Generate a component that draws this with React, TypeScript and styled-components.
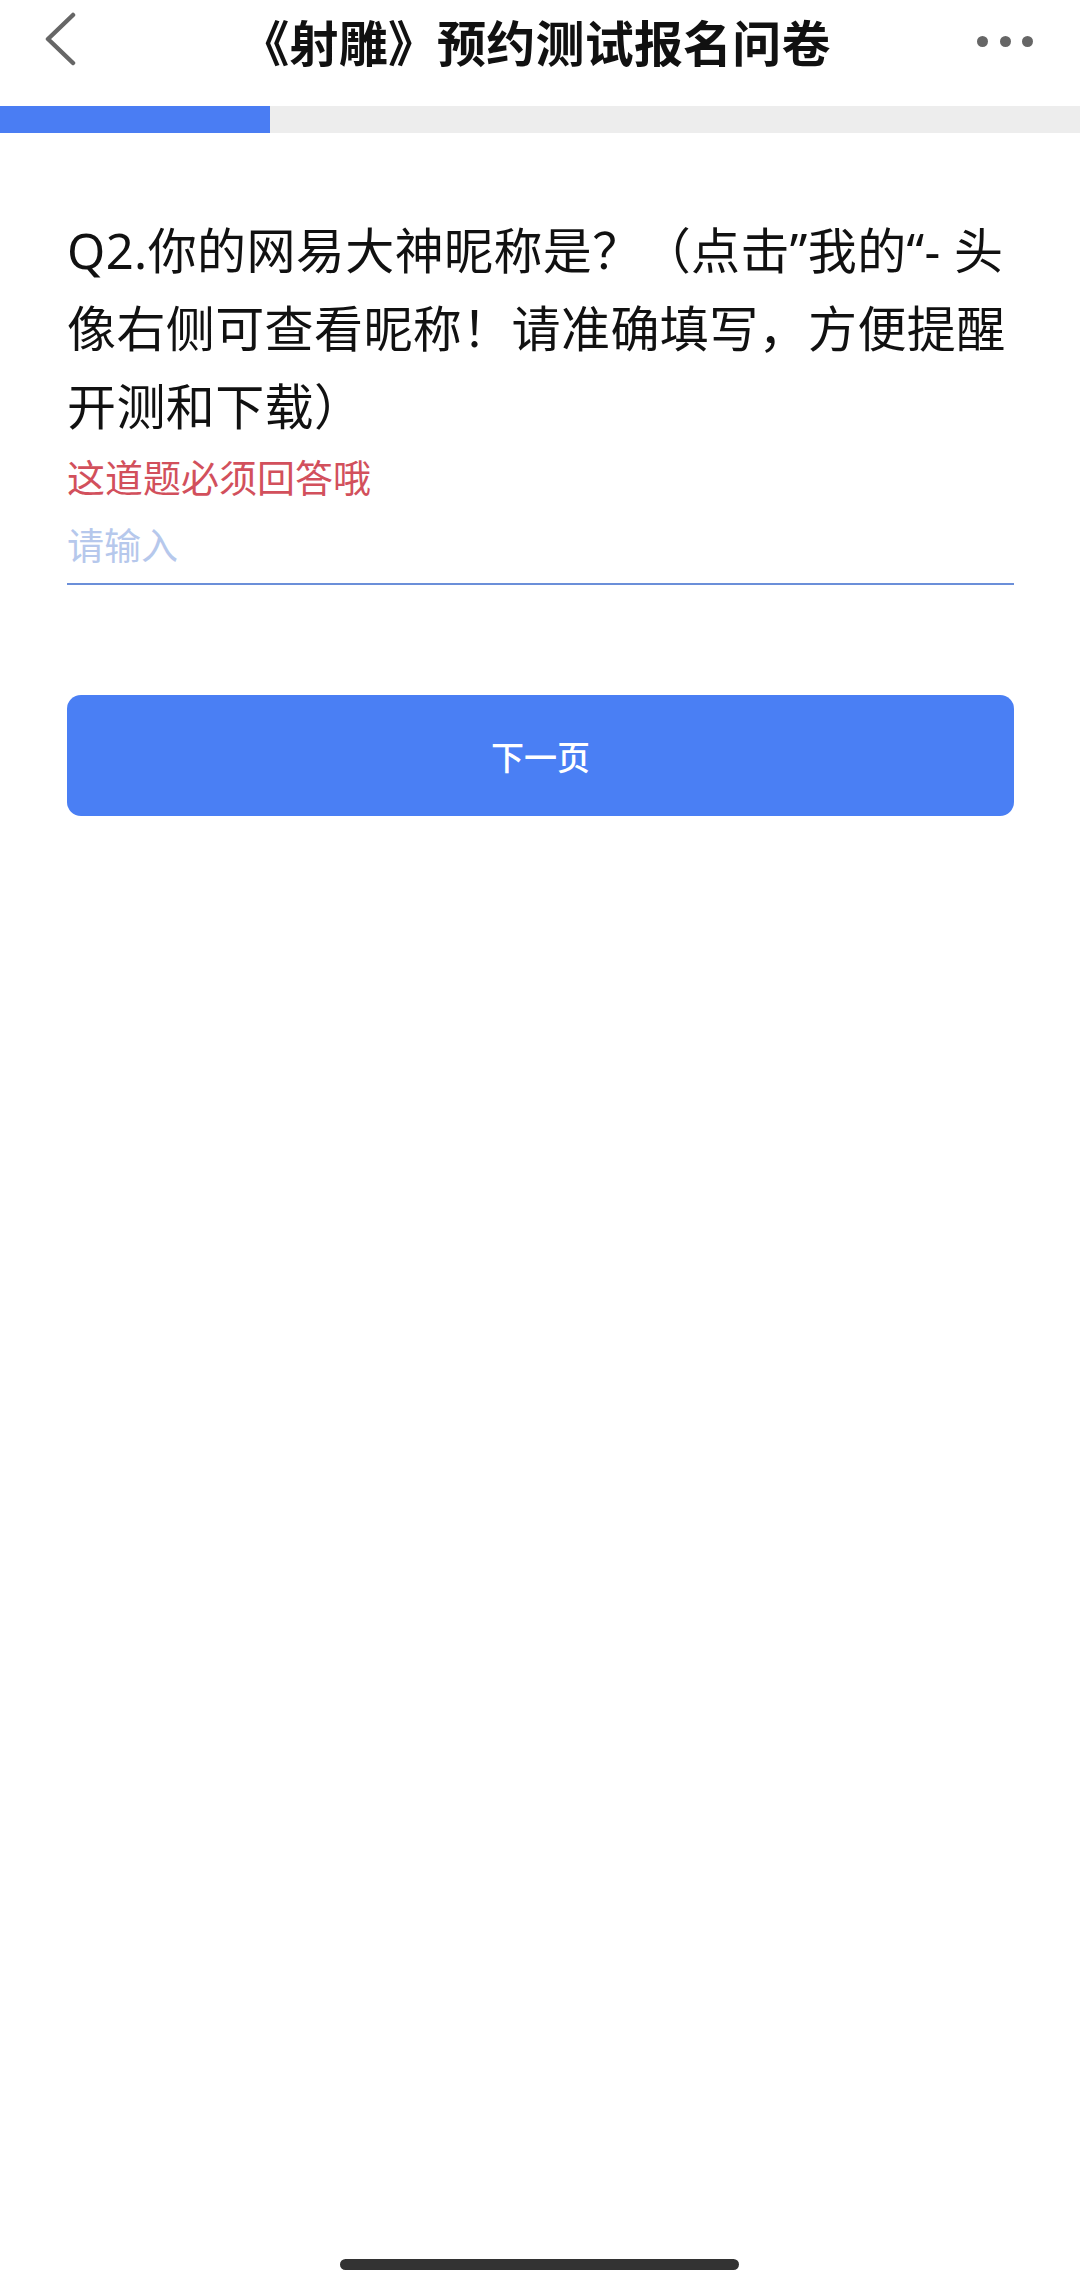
import React from "react";
import styled, { createGlobalStyle } from "styled-components";

const GlobalStyle = createGlobalStyle`
  * {
    box-sizing: border-box;
  }
  html, body {
    margin: 0;
    padding: 0;
    background: #ffffff;
    font-family: "Noto Sans", "Noto Sans CJK SC", sans-serif;
  }
`;

const Page = styled.div`
  width: 1080px;
  min-height: 2286px;
  background: #ffffff;
`;

const NavBar = styled.header`
  height: 80px;
  display: flex;
  align-items: center;
  justify-content: space-between;
  padding: 0 47px 0 40px;
`;

const BackButton = styled.button`
  width: 40px;
  height: 60px;
  padding: 0;
  border: none;
  background: none;
  display: flex;
  align-items: center;
  justify-content: center;
`;

const NavTitle = styled.h1`
  margin: 0 0 0 14px;
  font-family: "Noto Sans CJK SC", sans-serif;
  font-size: 49px;
  font-weight: 700;
  color: #111111;
  line-height: 1;
  letter-spacing: 0.2px;
`;

const MoreButton = styled.div`
  width: 56px;
  display: flex;
  align-items: center;
  justify-content: space-between;
  padding-top: 2px;
`;

const Dot = styled.span`
  width: 11px;
  height: 11px;
  border-radius: 50%;
  background: #666666;
`;

const Progress = styled.div`
  margin-top: 26px;
  height: 27px;
  background: #ededed;
`;

const ProgressFill = styled.div`
  height: 100%;
  background: #4a7df3;
`;

const Content = styled.main`
  padding: 78px 66px 0 67px;
`;

const Question = styled.p`
  margin: 0;
  font-size: 49px;
  line-height: 78px;
  letter-spacing: 0.4px;
  color: #111111;
`;

const ErrorTip = styled.div`
  margin-top: 6px;
  font-family: "Noto Sans CJK SC", sans-serif;
  font-size: 38px;
  line-height: 50px;
  color: #d2505c;
`;

const TextInput = styled.input`
  display: block;
  width: 100%;
  height: 80px;
  margin-top: 4px;
  padding: 0;
  border: none;
  border-bottom: 2px solid #6b8fd9;
  outline: none;
  background: transparent;
  font-family: "Noto Sans CJK SC", sans-serif;
  font-size: 37px;
  color: #222222;
  &::placeholder {
    color: #b6c8ec;
  }
`;

const NextButton = styled.button`
  display: block;
  width: 100%;
  height: 121px;
  margin-top: 110px;
  border: none;
  border-radius: 14px;
  background: #4a7ff4;
  color: #ffffff;
  font-family: "Noto Sans CJK SC", sans-serif;
  font-size: 33px;
  font-weight: 500;
`;

const HomeIndicator = styled.div`
  position: fixed;
  left: 340px;
  bottom: 16px;
  width: 399px;
  height: 11px;
  border-radius: 6px;
  background: #333333;
`;

function App() {
  const progress = 25;

  return (
    <Page>
      <GlobalStyle />
      <NavBar>
        <BackButton aria-label="返回">
          <svg width="34" height="56" viewBox="0 0 34 56">
            <polyline
              points="30,3 5,27 30,51"
              fill="none"
              stroke="#666666"
              strokeWidth="4.5"
              strokeLinecap="round"
              strokeLinejoin="round"
            />
          </svg>
        </BackButton>
        <NavTitle>《射雕》预约测试报名问卷</NavTitle>
        <MoreButton>
          <Dot />
          <Dot />
          <Dot />
        </MoreButton>
      </NavBar>
      <Progress>
        <ProgressFill style={{ width: `${progress}%` }} />
      </Progress>
      <Content>
        <Question>
          Q2.你的网易大神昵称是？（点击”我的“- 头像右侧可查看昵称！请准确填写，方便提醒开测和下载）
        </Question>
        <ErrorTip>这道题必须回答哦</ErrorTip>
        <TextInput placeholder="请输入" />
        <NextButton>下一页</NextButton>
      </Content>
      <HomeIndicator />
    </Page>
  );
}

export default App;
